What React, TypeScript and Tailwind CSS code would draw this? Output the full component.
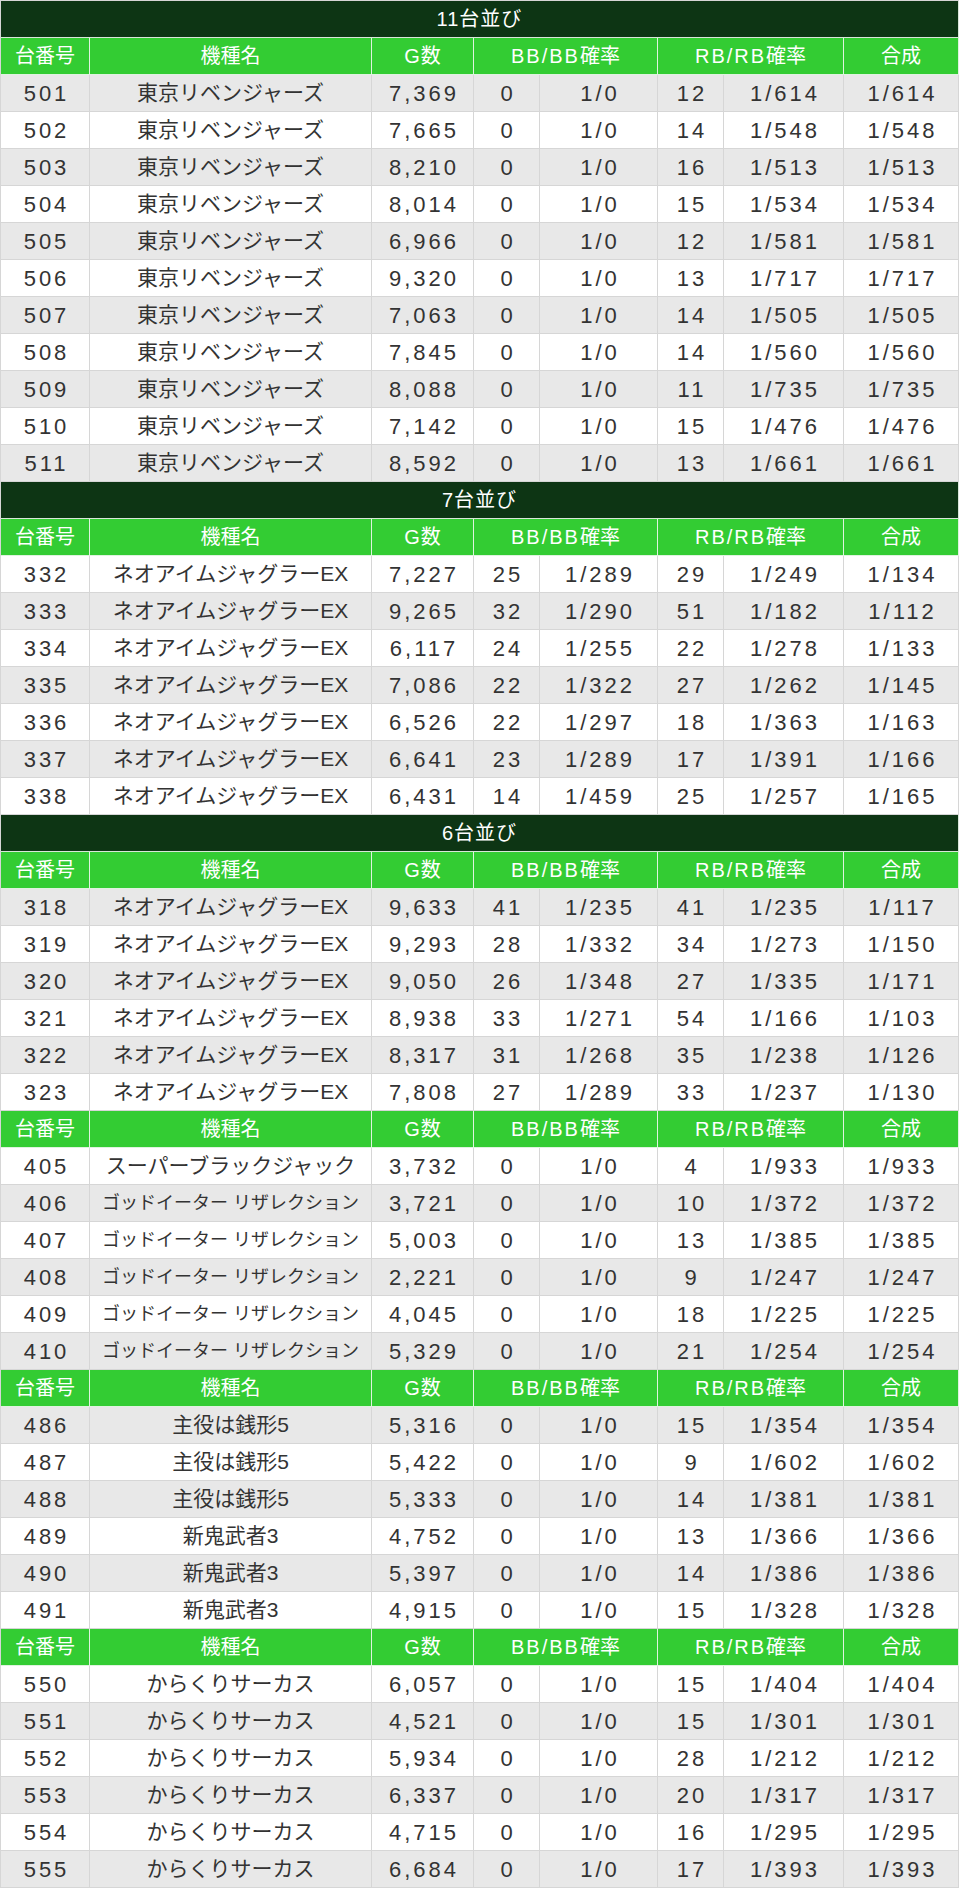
import React from 'react'

type DataRow = [string, string, string, string, string, string, string, string]

interface Group {
  rows: DataRow[]
}

interface Section {
  title: string
  groups: Group[]
}

const TOKYO = '東京リベンジャーズ'
const NEO = 'ネオアイムジャグラーEX'
const GOD = 'ゴッドイーター リザレクション'
const ZENI = '主役は銭形5'
const ONI = '新鬼武者3'
const KARA = 'からくりサーカス'

const sections: Section[] = [
  {
    title: '11台並び',
    groups: [
      {
        rows: [
          ['501', TOKYO, '7,369', '0', '1/0', '12', '1/614', '1/614'],
          ['502', TOKYO, '7,665', '0', '1/0', '14', '1/548', '1/548'],
          ['503', TOKYO, '8,210', '0', '1/0', '16', '1/513', '1/513'],
          ['504', TOKYO, '8,014', '0', '1/0', '15', '1/534', '1/534'],
          ['505', TOKYO, '6,966', '0', '1/0', '12', '1/581', '1/581'],
          ['506', TOKYO, '9,320', '0', '1/0', '13', '1/717', '1/717'],
          ['507', TOKYO, '7,063', '0', '1/0', '14', '1/505', '1/505'],
          ['508', TOKYO, '7,845', '0', '1/0', '14', '1/560', '1/560'],
          ['509', TOKYO, '8,088', '0', '1/0', '11', '1/735', '1/735'],
          ['510', TOKYO, '7,142', '0', '1/0', '15', '1/476', '1/476'],
          ['511', TOKYO, '8,592', '0', '1/0', '13', '1/661', '1/661'],
        ],
      },
    ],
  },
  {
    title: '7台並び',
    groups: [
      {
        rows: [
          ['332', NEO, '7,227', '25', '1/289', '29', '1/249', '1/134'],
          ['333', NEO, '9,265', '32', '1/290', '51', '1/182', '1/112'],
          ['334', NEO, '6,117', '24', '1/255', '22', '1/278', '1/133'],
          ['335', NEO, '7,086', '22', '1/322', '27', '1/262', '1/145'],
          ['336', NEO, '6,526', '22', '1/297', '18', '1/363', '1/163'],
          ['337', NEO, '6,641', '23', '1/289', '17', '1/391', '1/166'],
          ['338', NEO, '6,431', '14', '1/459', '25', '1/257', '1/165'],
        ],
      },
    ],
  },
  {
    title: '6台並び',
    groups: [
      {
        rows: [
          ['318', NEO, '9,633', '41', '1/235', '41', '1/235', '1/117'],
          ['319', NEO, '9,293', '28', '1/332', '34', '1/273', '1/150'],
          ['320', NEO, '9,050', '26', '1/348', '27', '1/335', '1/171'],
          ['321', NEO, '8,938', '33', '1/271', '54', '1/166', '1/103'],
          ['322', NEO, '8,317', '31', '1/268', '35', '1/238', '1/126'],
          ['323', NEO, '7,808', '27', '1/289', '33', '1/237', '1/130'],
        ],
      },
      {
        rows: [
          ['405', 'スーパーブラックジャック', '3,732', '0', '1/0', '4', '1/933', '1/933'],
          ['406', GOD, '3,721', '0', '1/0', '10', '1/372', '1/372'],
          ['407', GOD, '5,003', '0', '1/0', '13', '1/385', '1/385'],
          ['408', GOD, '2,221', '0', '1/0', '9', '1/247', '1/247'],
          ['409', GOD, '4,045', '0', '1/0', '18', '1/225', '1/225'],
          ['410', GOD, '5,329', '0', '1/0', '21', '1/254', '1/254'],
        ],
      },
      {
        rows: [
          ['486', ZENI, '5,316', '0', '1/0', '15', '1/354', '1/354'],
          ['487', ZENI, '5,422', '0', '1/0', '9', '1/602', '1/602'],
          ['488', ZENI, '5,333', '0', '1/0', '14', '1/381', '1/381'],
          ['489', ONI, '4,752', '0', '1/0', '13', '1/366', '1/366'],
          ['490', ONI, '5,397', '0', '1/0', '14', '1/386', '1/386'],
          ['491', ONI, '4,915', '0', '1/0', '15', '1/328', '1/328'],
        ],
      },
      {
        rows: [
          ['550', KARA, '6,057', '0', '1/0', '15', '1/404', '1/404'],
          ['551', KARA, '4,521', '0', '1/0', '15', '1/301', '1/301'],
          ['552', KARA, '5,934', '0', '1/0', '28', '1/212', '1/212'],
          ['553', KARA, '6,337', '0', '1/0', '20', '1/317', '1/317'],
          ['554', KARA, '4,715', '0', '1/0', '16', '1/295', '1/295'],
          ['555', KARA, '6,684', '0', '1/0', '17', '1/393', '1/393'],
        ],
      },
    ],
  },
]

// 1行 = 37px (セル36px + 下罫線1px)
const grid = 'grid grid-cols-[89px_282px_102px_66px_118px_66px_120px_115px] h-[37px]'

const TitleRow: React.FC<{ title: string }> = ({ title }) => (
  <div className="h-[37px] flex items-center justify-center bg-[#0d3514] border-r border-b border-[#d9e6d9] text-white text-[20px]">
    <span className="tracking-[1px]">{title}</span>
  </div>
)

const HeaderRow: React.FC = () => {
  const cell = 'flex items-center justify-center border-r border-b border-[#dff3df] text-white text-[20px]'
  return (
    <div className={`${grid} bg-[#33cc33]`}>
      <div className={cell}>台番号</div>
      <div className={cell}>機種名</div>
      <div className={cell}>
        <span className="tracking-[1px]">G</span>数
      </div>
      <div className={`${cell} col-span-2`}>
        <span className="tracking-[2px]">BB/BB</span>確率
      </div>
      <div className={`${cell} col-span-2`}>
        <span className="tracking-[2px]">RB/RB</span>確率
      </div>
      <div className={cell}>合成</div>
    </div>
  )
}

const DataLine: React.FC<{ row: DataRow; striped: boolean }> = ({ row, striped }) => {
  const cell = 'flex items-center justify-center border-r border-b border-[#d6d6d6] whitespace-nowrap'
  const num = `${cell} text-[22px] tracking-[3px] pl-[3px]`
  const nameSize = row[1] === GOD ? 'text-[18px]' : 'text-[21px]'
  return (
    <div className={`${grid} ${striped ? 'bg-[#e8e8e8]' : 'bg-white'} text-[#333333]`}>
      <div className={num}>{row[0]}</div>
      <div className={`${cell} ${nameSize}`}>{row[1]}</div>
      {row.slice(2).map((v, i) => (
        <div key={i} className={num}>
          {v}
        </div>
      ))}
    </div>
  )
}

export default function App() {
  // テーブル全体で行番号を数え、奇数行をグレーにする
  let idx = 0
  const lines: React.ReactNode[] = []
  sections.forEach((s, si) => {
    idx++
    lines.push(<TitleRow key={`t${si}`} title={s.title} />)
    s.groups.forEach((g, gi) => {
      idx++
      lines.push(<HeaderRow key={`h${si}-${gi}`} />)
      g.rows.forEach((r) => {
        idx++
        lines.push(<DataLine key={`${si}-${r[0]}`} row={r} striped={idx % 2 === 1} />)
      })
    })
  })

  return (
    <div className="bg-white min-h-screen font-['Liberation_Sans','Noto_Sans_CJK_JP',sans-serif]">
      <div className="w-[959px] border-t border-l border-[#d6d6d6]">{lines}</div>
    </div>
  )
}
